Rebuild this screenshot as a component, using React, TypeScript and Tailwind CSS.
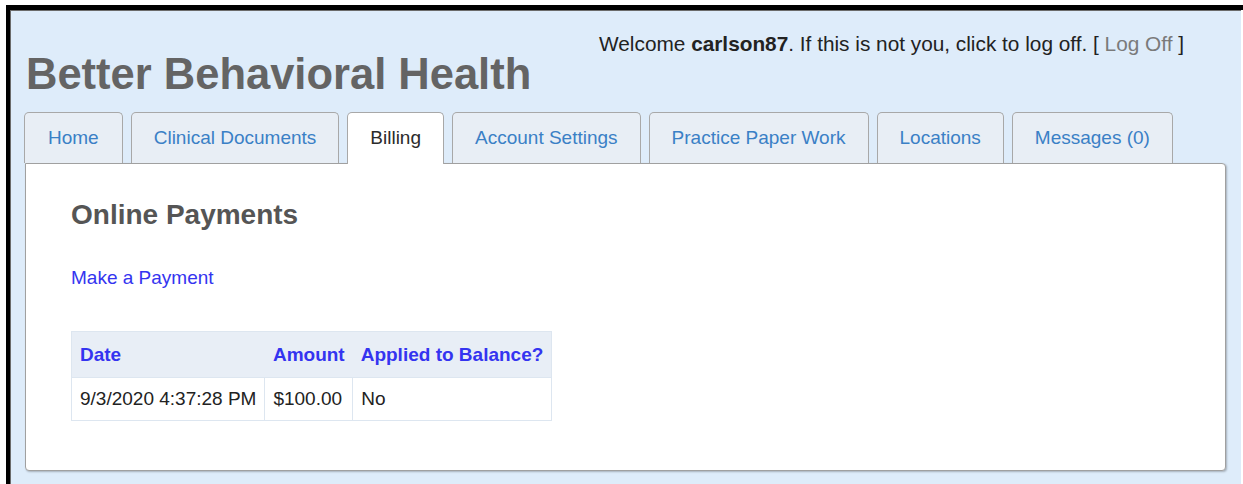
const tabs = [
  'Home',
  'Clinical Documents',
  'Billing',
  'Account Settings',
  'Practice Paper Work',
  'Locations',
  'Messages (0)',
];

const payments = [{ date: '9/3/2020 4:37:28 PM', amount: '$100.00', applied: 'No' }];

const App = () => {
  const active = 'Billing';

  return (
    <div className="h-[484px] overflow-hidden bg-white pl-[6px] pt-[5px] font-['Liberation_Sans',Arial,sans-serif]">
      <div className="h-full border-l-[4px] border-t-[5px] border-black">
        <div className="h-full mr-[2px] border-l border-t border-[#6b6b6b] bg-[#deecfa]">

          {/* Header */}
          <div className="flex items-start">
            <h1 className="ml-[15px] mt-[38px] text-[43.5px] font-bold leading-[50px] text-[#646464]">
              Better Behavioral Health
            </h1>
            <p className="ml-auto mr-[57px] mt-[21px] text-[20.8px] leading-[24px] text-[#222]">
              Welcome <b>carlson87</b>. If this is not you, click to log off. [{' '}
              <a href="#" className="text-[#7a7a7a]">Log Off</a> ]
            </p>
          </div>

          {/* Tabs */}
          <ul className="relative z-10 ml-[13px] mt-[13px] flex gap-2">
            {tabs.map((tab) => (
              <li
                key={tab}
                className={
                  tab === active
                    ? '-mb-px flex h-[52px] items-center rounded-t-[5px] border border-b-0 border-[#a8a8a8] bg-white px-[22px] text-[19px] text-[#2b2b2b]'
                    : 'flex h-[51px] items-center rounded-t-[5px] border border-b-0 border-[#a8a8a8] bg-[#e8eef5] px-[22px] text-[19px] text-[#3a80c6] first:px-[23px]'
                }
              >
                {tab}
              </li>
            ))}
          </ul>

          {/* Panel */}
          <div className="ml-[14px] h-[308px] w-[1201px] rounded-[4px] rounded-tl-none border border-[#a0a0a0] bg-white pl-[45px] pt-[35px] shadow-[1px_1px_2px_rgba(0,0,0,0.25)]">
            <h2 className="text-[28px] font-bold leading-[32px] text-[#555]">Online Payments</h2>
            <a href="#" className="mt-[36px] block text-[19px] leading-[22px] text-[#3434f0]">
              Make a Payment
            </a>

            <table className="mt-[42px] border-collapse border border-[#dde6f0] text-[19px] leading-[22px]">
              <thead>
                <tr className="bg-[#e8eef6] text-[#3434f0]">
                  <th className="px-2 pb-[11px] pt-[12px] text-left font-bold">Date</th>
                  <th className="px-2 pb-[11px] pt-[12px] text-left font-bold">Amount</th>
                  <th className="pl-2 pr-2 pb-[11px] pt-[12px] text-left font-bold">Applied to Balance?</th>
                </tr>
              </thead>
              <tbody>
                {payments.map((p) => (
                  <tr key={p.date} className="text-[#222]">
                    <td className="border border-[#dde6f0] px-2 py-[10px]">{p.date}</td>
                    <td className="border border-[#dde6f0] px-2 py-[10px]">{p.amount}</td>
                    <td className="border border-[#dde6f0] px-2 py-[10px]">{p.applied}</td>
                  </tr>
                ))}
              </tbody>
            </table>
          </div>
        </div>
      </div>
    </div>
  );
};

export default App;
